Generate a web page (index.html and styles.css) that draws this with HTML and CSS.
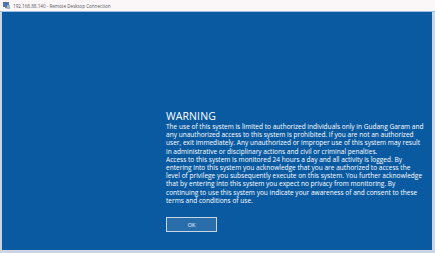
FILE: index.html
```html
<!DOCTYPE html>
<html>
<head>
<meta charset="utf-8">
<link rel="stylesheet" href="styles.css">
</head>
<body>
<div class="window">
  <div class="titlebar">
    <svg class="app-icon" width="7" height="7" viewBox="0 0 7 7">
      <rect x="0.5" y="0.5" width="5" height="4" fill="#3a78c8" stroke="#5a6470" stroke-width="0.8"/>
      <rect x="2" y="4.6" width="3" height="1.6" fill="#7a8590"/>
      <rect x="4" y="3" width="3" height="4" fill="#9fb4c8"/>
    </svg>
    <span class="title-text">192.168.88.140 - Remote Desktop Connection</span>
  </div>
  <div class="screen">
    <div class="notice">
      <h1 class="heading">WARNING</h1>
      <div class="body">
        <div class="line">The use of this system is limited to authorized individuals only in Gudang Garam and</div>
        <div class="line">any unauthorized access to this system is prohibited. If you are not an authorized</div>
        <div class="line">user, exit immediately. Any unauthorized or improper use of this system may result</div>
        <div class="line">in administrative or disciplinary actions and civil or criminal penalties.</div>
        <div class="line">Access to this system is monitored 24 hours a day and all activity is logged. By</div>
        <div class="line">entering into this system you acknowledge that you are authorized to access the</div>
        <div class="line">level of privilege you subsequently execute on this system. You further acknowledge</div>
        <div class="line">that by entering into this system you expect no privacy from monitoring. By</div>
        <div class="line">continuing to use this system you indicate your awareness of and consent to these</div>
        <div class="line">terms and conditions of use.</div>
      </div>
      <button class="ok-btn">OK</button>
    </div>
  </div>
</div>
</body>
</html>
```
FILE: styles.css
```css
html, body {
  margin: 0;
  padding: 0;
  background: #f2f4f7;
}
.window {
  width: 435px;
  height: 253px;
  display: flex;
  flex-direction: column;
  font-family: "Open Sans", "Noto Sans", sans-serif;
}
.titlebar {
  height: 12px;
  background: #fbf7f9;
  display: flex;
  align-items: center;
  gap: 3px;
  padding-left: 3px;
  border-bottom: 1px solid #9fc0e0;
  box-sizing: border-box;
}
.app-icon {
  flex: none;
}
.title-text {
  font-size: 4.6px;
  color: #555;
  white-space: nowrap;
}
.screen {
  flex: 1;
  background: #0a5aa1;
  border-left: 2px solid #c8d6e6;
  border-right: 3px solid #c8d6e6;
  border-bottom: 3px solid #c8d6e6;
  display: flex;
}
.notice {
  margin-left: 164px;
  padding-top: 97px;
  color: #fff;
}
.heading {
  margin: 0;
  font-weight: normal;
  font-size: 10.5px;
  line-height: 14px;
  letter-spacing: 0.1px;
}
.body {
  font-size: 6.55px;
  line-height: 8.2px;
  white-space: nowrap;
}
.ok-btn {
  display: block;
  margin-top: 12px;
  width: 51px;
  height: 15px;
  padding: 0;
  background: #2a6dab;
  border: 1px solid #c9d6e4;
  color: #fff;
  font-family: inherit;
  font-size: 5.5px;
}
```
